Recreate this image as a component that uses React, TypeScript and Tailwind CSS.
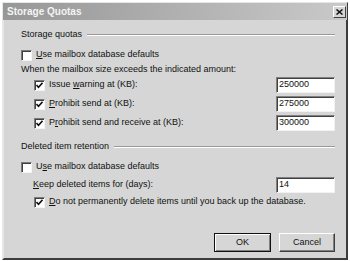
import React from 'react';

const font = { fontFamily: '"Liberation Sans", Arial, sans-serif' };

const CheckBox = ({ checked }: { checked?: boolean }) => (
  <div className="w-[11px] h-[11px] shrink-0 bg-white border border-t-[#7a7a7a] border-l-[#7a7a7a] border-b-[#f4f4f4] border-r-[#f4f4f4] shadow-[inset_1px_1px_0_#404040] flex items-center justify-center">
    {checked && (
      <svg width="7" height="7" viewBox="0 0 7 7">
        <path d="M0.5 3 L2.5 5.2 L6.5 0.8" fill="none" stroke="#111" strokeWidth="1.6" />
      </svg>
    )}
  </div>
);

const Field = ({ value }: { value: string }) => (
  <div className="w-[59px] h-[16px] bg-white border border-t-[#808080] border-l-[#808080] border-b-[#f2f2f2] border-r-[#f2f2f2] shadow-[inset_1px_1px_0_#404040] flex items-center pl-[2px] text-[9px] text-[#111]">
    {value}
  </div>
);

const Separator = ({ label }: { label: string }) => (
  <div className="flex items-center h-full w-full">
    <span className="text-[9px] text-[#111] whitespace-nowrap">{label}</span>
    <div className="flex-1 ml-[5px] h-[2px] border-t border-t-[#9a9a9a] border-b border-b-white" />
  </div>
);

export default function App() {
  return (
    <div className="w-[350px] h-[261px] bg-white overflow-hidden" style={font}>
      <div className="ml-[2px] mt-[2px] w-[346px] h-[258px] bg-[#d6d6d6] border-2 border-t-[#e6e6e6] border-l-[#e6e6e6] border-r-[#3c3c3c] border-b-[#3c3c3c] flex flex-col">
        {/* title bar */}
        <div className="h-[17px] mt-[-1px] mx-[-1px] flex items-center justify-between bg-gradient-to-r from-[#979797] to-[#c9c9c9]">
          <span className="pl-[4px] text-[10px] font-bold text-[#f4f4f4] leading-none">Storage Quotas</span>
          <div className="w-[13px] h-[12px] mr-[1px] bg-[#d6d6d6] border border-t-white border-l-white border-r-[#404040] border-b-[#404040] flex items-center justify-center">
            <svg width="7" height="6" viewBox="0 0 7 6">
              <path d="M0.5 0.5 L6.5 5.5 M6.5 0.5 L0.5 5.5" stroke="#111" strokeWidth="1.5" />
            </svg>
          </div>
        </div>

        <div className="flex flex-col text-[9px] text-[#111] pr-[11px]">
          <div className="h-[6px]" />
          <div className="h-[18px] pl-[17px]">
            <Separator label="Storage quotas" />
          </div>
          <div className="h-[22px] pl-[17px] flex items-center">
            <CheckBox />
            <span className="ml-[4px]"><u>U</u>se mailbox database defaults</span>
          </div>
          <div className="h-[8px] pl-[17px] flex items-center whitespace-nowrap">
            When the mailbox size exceeds the indicated amount:
          </div>
          <div className="h-[22px] pl-[30px] flex items-center justify-between">
            <div className="flex items-center">
              <CheckBox checked />
              <span className="ml-[4px]">Issue <u>w</u>arning at (KB):</span>
            </div>
            <Field value="250000" />
          </div>
          <div className="h-[16px] pl-[30px] flex items-center justify-between">
            <div className="flex items-center">
              <CheckBox checked />
              <span className="ml-[4px]"><u>P</u>rohibit send at (KB):</span>
            </div>
            <Field value="275000" />
          </div>
          <div className="h-[22px] pl-[30px] flex items-center justify-between">
            <div className="flex items-center">
              <CheckBox checked />
              <span className="ml-[4px]">P<u>r</u>ohibit send and receive at (KB):</span>
            </div>
            <Field value="300000" />
          </div>
          <div className="h-[26px] pl-[17px]">
            <Separator label="Deleted item retention" />
          </div>
          <div className="h-[14px] pl-[17px] flex items-center">
            <CheckBox />
            <span className="ml-[4px]">U<u>s</u>e mailbox database defaults</span>
          </div>
          <div className="h-[22px] pl-[29px] flex items-center justify-between">
            <span><u>K</u>eep deleted items for (days):</span>
            <Field value="14" />
          </div>
          <div className="h-[12px] pl-[30px] flex items-center">
            <CheckBox checked />
            <span className="ml-[4px] whitespace-nowrap"><u>D</u>o not permanently delete items until you back up the database.</span>
          </div>
          <div className="mt-[25px] h-[19px] flex justify-end gap-[8px]">
            <button className="w-[57px] h-[19px] bg-[#d6d6d6] border border-[#111] shadow-[inset_1px_1px_0_#ffffff,inset_-1px_-1px_0_#808080] text-[9px] text-[#111]">
              OK
            </button>
            <button className="w-[56px] h-[19px] bg-[#d6d6d6] border border-t-white border-l-white border-r-[#404040] border-b-[#404040] shadow-[inset_-1px_-1px_0_#808080] text-[9px] text-[#111]">
              Cancel
            </button>
          </div>
        </div>
      </div>
    </div>
  );
}
